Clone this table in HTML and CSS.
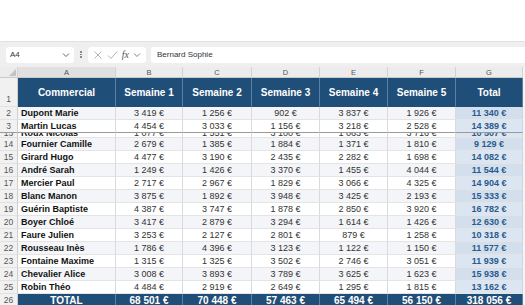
FILE: index.html
```html
<!DOCTYPE html>
<html lang="fr">
<head>
<meta charset="utf-8">
<title>Ventes</title>
<link rel="stylesheet" href="styles.css">
</head>
<body>
<div class="app">
  <div class="topspace"></div>
  <div class="toolbar">
    <div class="namebox"><span>A4</span><svg width="8" height="6" viewBox="0 0 8 6"><path d="M1 1.5 L4 4.5 L7 1.5" fill="none" stroke="#666" stroke-width="1"/></svg></div>
    <div class="dots"><span></span><span></span><span></span></div>
    <div class="fxbox">
      <svg width="10" height="10" viewBox="0 0 10 10"><path d="M1.5 1.5 L8.5 8.5 M8.5 1.5 L1.5 8.5" stroke="#b5b5b5" stroke-width="1" fill="none"/></svg>
      <svg width="11" height="10" viewBox="0 0 11 10"><path d="M1 5.5 L4 8.5 L10 1.5" stroke="#b5b5b5" stroke-width="1" fill="none"/></svg>
      <span class="fx">fx</span>
      <svg width="8" height="6" viewBox="0 0 8 6"><path d="M1 1.5 L4 4.5 L7 1.5" fill="none" stroke="#888" stroke-width="1"/></svg>
    </div>
    <div class="formula">Bernard Sophie</div>
  </div>
  <div class="sheet">
    <div class="row colhead">
      <div class="corner"><span class="tri"></span></div>
      <div class="ch sel">A</div><div class="ch">B</div><div class="ch">C</div><div class="ch">D</div><div class="ch">E</div><div class="ch">F</div><div class="ch">G</div>
    </div>
    <div class="row head">
      <div class="rh">1</div>
      <div class="h">Commercial</div><div class="h">Semaine 1</div><div class="h">Semaine 2</div><div class="h">Semaine 3</div><div class="h">Semaine 4</div><div class="h">Semaine 5</div><div class="h">Total</div>
    </div>
    <div class="row band">
      <div class="rh">2</div><div class="n">Dupont Marie</div><div class="v">3 419 €</div><div class="v">1 256 €</div><div class="v">902 €</div><div class="v">3 837 €</div><div class="v">1 926 €</div><div class="t">11 340 €</div>
    </div>
    <div class="row frozen">
      <div class="rh">3</div><div class="n">Martin Lucas</div><div class="v">4 454 €</div><div class="v">3 033 €</div><div class="v">1 156 €</div><div class="v">3 218 €</div><div class="v">2 528 €</div><div class="t">14 389 €</div>
    </div>
    <div class="row partial">
      <div class="rh">13</div><div class="n">Roux Nicolas</div><div class="v">1 077 €</div><div class="v">1 551 €</div><div class="v">3 100 €</div><div class="v">1 063 €</div><div class="v">3 716 €</div><div class="t">10 507 €</div>
    </div>
    <div class="row band">
      <div class="rh">14</div><div class="n">Fournier Camille</div><div class="v">2 679 €</div><div class="v">1 385 €</div><div class="v">1 884 €</div><div class="v">1 371 €</div><div class="v">1 810 €</div><div class="t">9 129 €</div>
    </div>
    <div class="row">
      <div class="rh">15</div><div class="n">Girard Hugo</div><div class="v">4 477 €</div><div class="v">3 190 €</div><div class="v">2 435 €</div><div class="v">2 282 €</div><div class="v">1 698 €</div><div class="t">14 082 €</div>
    </div>
    <div class="row band">
      <div class="rh">16</div><div class="n">André Sarah</div><div class="v">1 249 €</div><div class="v">1 426 €</div><div class="v">3 370 €</div><div class="v">1 455 €</div><div class="v">4 044 €</div><div class="t">11 544 €</div>
    </div>
    <div class="row">
      <div class="rh">17</div><div class="n">Mercier Paul</div><div class="v">2 717 €</div><div class="v">2 967 €</div><div class="v">1 829 €</div><div class="v">3 066 €</div><div class="v">4 325 €</div><div class="t">14 904 €</div>
    </div>
    <div class="row band">
      <div class="rh">18</div><div class="n">Blanc Manon</div><div class="v">3 875 €</div><div class="v">1 892 €</div><div class="v">3 948 €</div><div class="v">3 425 €</div><div class="v">2 193 €</div><div class="t">15 333 €</div>
    </div>
    <div class="row">
      <div class="rh">19</div><div class="n">Guérin Baptiste</div><div class="v">4 387 €</div><div class="v">3 747 €</div><div class="v">1 878 €</div><div class="v">2 850 €</div><div class="v">3 920 €</div><div class="t">16 782 €</div>
    </div>
    <div class="row band">
      <div class="rh">20</div><div class="n">Boyer Chloé</div><div class="v">3 417 €</div><div class="v">2 879 €</div><div class="v">3 294 €</div><div class="v">1 614 €</div><div class="v">1 426 €</div><div class="t">12 630 €</div>
    </div>
    <div class="row">
      <div class="rh">21</div><div class="n">Faure Julien</div><div class="v">3 253 €</div><div class="v">2 127 €</div><div class="v">2 801 €</div><div class="v">879 €</div><div class="v">1 258 €</div><div class="t">10 318 €</div>
    </div>
    <div class="row band">
      <div class="rh">22</div><div class="n">Rousseau Inès</div><div class="v">1 786 €</div><div class="v">4 396 €</div><div class="v">3 123 €</div><div class="v">1 122 €</div><div class="v">1 150 €</div><div class="t">11 577 €</div>
    </div>
    <div class="row">
      <div class="rh">23</div><div class="n">Fontaine Maxime</div><div class="v">1 315 €</div><div class="v">1 325 €</div><div class="v">3 502 €</div><div class="v">2 746 €</div><div class="v">3 051 €</div><div class="t">11 939 €</div>
    </div>
    <div class="row band">
      <div class="rh">24</div><div class="n">Chevalier Alice</div><div class="v">3 008 €</div><div class="v">3 893 €</div><div class="v">3 789 €</div><div class="v">3 625 €</div><div class="v">1 623 €</div><div class="t">15 938 €</div>
    </div>
    <div class="row">
      <div class="rh">25</div><div class="n">Robin Théo</div><div class="v">4 484 €</div><div class="v">2 919 €</div><div class="v">2 649 €</div><div class="v">1 295 €</div><div class="v">1 815 €</div><div class="t">13 162 €</div>
    </div>
    <div class="row total">
      <div class="rh">26</div><div class="h">TOTAL</div><div class="h">68 501 €</div><div class="h">70 448 €</div><div class="h">57 463 €</div><div class="h">65 494 €</div><div class="h">56 150 €</div><div class="h">318 056 €</div>
    </div>
  </div>
</div>
</body>
</html>
```

FILE: styles.css
```css
* { box-sizing: border-box; }
html, body { margin: 0; padding: 0; background: #ffffff; }
body { font-family: "Liberation Sans", Arial, sans-serif; width: 525px; height: 305px; overflow: hidden; }

.topspace { height: 41px; background: #ffffff; }

.toolbar {
  height: 26px;
  background: #efeff0;
  border-top: 1px solid #e2e2e4;
  display: flex;
  align-items: center;
  padding-left: 6px;
}
.namebox {
  width: 68px; height: 16px;
  background: #fff;
  border-radius: 3px;
  display: flex; align-items: center; justify-content: space-between;
  padding: 0 4px;
  font-size: 8px; color: #333;
}
.dots {
  width: 14px; height: 16px;
  display: flex; flex-direction: column; align-items: center; justify-content: center; gap: 1px;
}
.dots span { width: 1.5px; height: 1.5px; background: #777; border-radius: 50%; }
.fxbox {
  width: 58px; height: 16px;
  background: #fff;
  border-radius: 3px;
  display: flex; align-items: center; justify-content: space-around;
  padding: 0 3px;
}
.fx { font-family: "Liberation Serif", serif; font-style: italic; font-size: 10px; color: #555; }
.formula {
  flex: 1;
  height: 16px;
  margin-left: 5px;
  background: #fff;
  border-radius: 3px 0 0 3px;
  font-size: 8px; color: #333;
  display: flex; align-items: center;
  padding-left: 6px;
}

.sheet { display: flex; flex-direction: column; }
.row {
  display: grid;
  grid-template-columns: 18px 98px 67px 69px 68px 68px 68px 67px 2px;
  height: 13px;
}
.row > div {
  display: flex; align-items: center; justify-content: center;
  border-right: 1px solid #dadada;
  border-bottom: 1px solid #e4e4e4;
  white-space: nowrap;
  overflow: hidden;
}
.row::after { content: ""; background: #f5f5f5; }

.colhead { height: 11px; }
.colhead > div {
  background: #ececec;
  color: #555;
  font-size: 7.5px;
  border-right: 1px solid #d2d2d2;
  border-bottom: 1px solid #c9c9c9;
}
.colhead > .sel { background: #e0e0e0; }
.corner { position: relative; }
.tri {
  position: absolute; right: 1px; bottom: 1px;
  width: 0; height: 0;
  border-left: 7px solid transparent;
  border-bottom: 7px solid #c3c3c3;
}

.rh {
  background: #f1f1f1;
  color: #555;
  font-size: 8.5px;
  border-right: 1px solid #cfcfcf !important;
  border-bottom: 1px solid #e2e2e2 !important;
}
.head { height: 29px; }
.head > .rh { align-items: flex-end; padding-bottom: 2px; }

.h {
  background: #1f4e79;
  color: #fff;
  font-weight: bold;
  font-size: 10px;
  border-right: 1px solid #5b7ea3 !important;
  border-bottom: 1px solid #1f4e79 !important;
}

.n {
  justify-content: flex-start !important;
  padding-left: 3px;
  font-weight: bold;
  font-size: 9px;
  color: #111;
}
.v { font-size: 9px; color: #333; }
.t {
  font-size: 9px;
  font-weight: bold;
  color: #2a5b8c;
  background: #dbe6f2;
  border-right: 1px solid #cbd6e2 !important;
}
.band > .n, .band > .v { background: #f3f5f8; }
.band > .t { background: #d3dfed; }

.frozen > div { border-bottom: 1px solid #9a9a9a !important; }
.partial { height: 5px; }
.partial > div { align-items: flex-end; line-height: 8px; }

.total > .h { border-bottom: none !important; }
```
